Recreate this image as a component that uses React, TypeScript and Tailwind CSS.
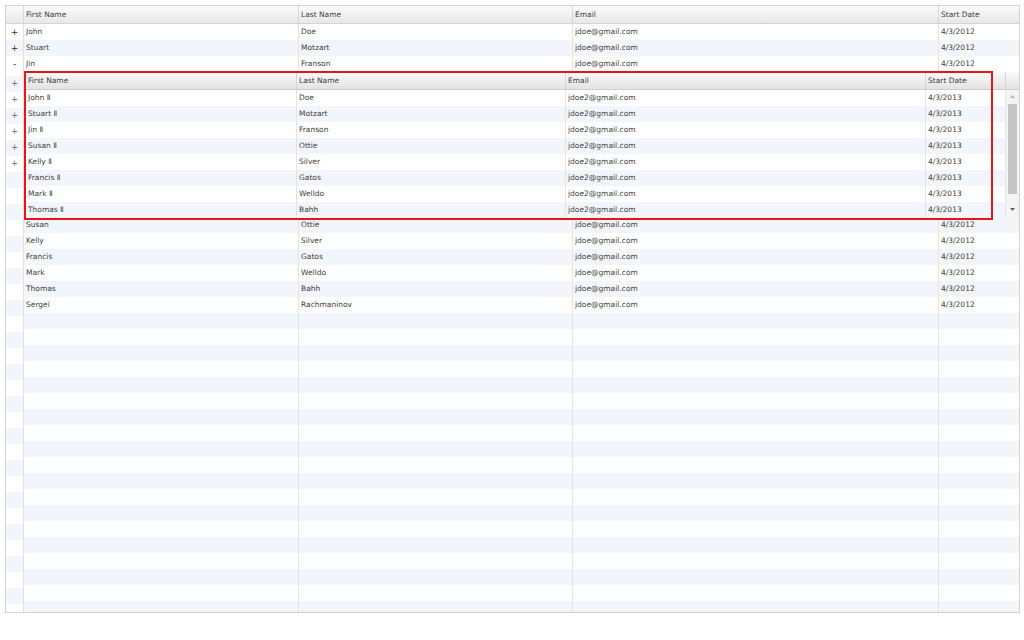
const outerRows = [
  { first: "John", last: "Doe", email: "jdoe@gmail.com", date: "4/3/2012" },
  { first: "Stuart", last: "Motzart", email: "jdoe@gmail.com", date: "4/3/2012" },
  { first: "Jin", last: "Franson", email: "jdoe@gmail.com", date: "4/3/2012" },
  { first: "Susan", last: "Ottie", email: "jdoe@gmail.com", date: "4/3/2012" },
  { first: "Kelly", last: "Silver", email: "jdoe@gmail.com", date: "4/3/2012" },
  { first: "Francis", last: "Gatos", email: "jdoe@gmail.com", date: "4/3/2012" },
  { first: "Mark", last: "Welldo", email: "jdoe@gmail.com", date: "4/3/2012" },
  { first: "Thomas", last: "Bahh", email: "jdoe@gmail.com", date: "4/3/2012" },
  { first: "Sergei", last: "Rachmaninov", email: "jdoe@gmail.com", date: "4/3/2012" },
];

const innerRows = [
  { first: "John Ⅱ", last: "Doe" },
  { first: "Stuart Ⅱ", last: "Motzart" },
  { first: "Jin Ⅱ", last: "Franson" },
  { first: "Susan Ⅱ", last: "Ottie" },
  { first: "Kelly Ⅱ", last: "Silver" },
  { first: "Francis Ⅱ", last: "Gatos" },
  { first: "Mark Ⅱ", last: "Welldo" },
  { first: "Thomas Ⅱ", last: "Bahh" },
];

const stripe = (i: number) => (i % 2 === 1 ? "bg-[#f2f5fa]" : "bg-white");

type Row = { first: string; last: string; email: string; date: string };

function OuterRow({ row, index }: { row?: Row; index: number }) {
  return (
    <div className={`relative flex h-[16px] shrink-0 items-center ${stripe(index)}`}>
      <div className="flex h-full w-[275px] items-center border-r border-[#e4e4e4] pl-[2px]">
        {row?.first}
      </div>
      <div className="flex h-full w-[274px] items-center border-r border-[#e4e4e4] pl-[2px]">
        {row?.last}
      </div>
      <div className="flex h-full w-[366px] items-center border-r border-[#e4e4e4] pl-[2px]">
        {row?.email}
      </div>
      <div className="flex h-full flex-1 items-center pl-[2px]">{row?.date}</div>
    </div>
  );
}

function NestedGrid() {
  return (
    <div className="relative z-10 mb-[-1px] h-[146px] shrink-0">
      <div className="flex h-[18px] bg-gradient-to-b from-[#fafafa] to-[#e3e3e3] border-b border-[#cdcdcd]">
        <div className="flex w-[273px] items-center border-r border-[#d6d6d6] pl-[4px]">First Name</div>
        <div className="flex w-[269px] items-center border-r border-[#d6d6d6] pl-[2px]">Last Name</div>
        <div className="flex w-[360px] items-center border-r border-[#d6d6d6] pl-[2px]">Email</div>
        <div className="flex w-[80px] items-center border-r border-[#d6d6d6] pl-[2px]">Start Date</div>
        <div className="flex-1" />
      </div>
      <div className="flex">
        <div className="flex-1">
          {innerRows.map((r, i) => (
            <div key={r.first} className={`flex h-[16px] items-center ${stripe(i)}`}>
              <div className="flex h-full w-[273px] items-center border-r border-[#e4e4e4] pl-[4px]">{r.first}</div>
              <div className="flex h-full w-[269px] items-center border-r border-[#e4e4e4] pl-[2px]">{r.last}</div>
              <div className="flex h-full w-[360px] items-center border-r border-[#e4e4e4] pl-[2px]">jdoe2@gmail.com</div>
              <div className="flex h-full w-[80px] items-center border-r border-[#e4e4e4] pl-[2px]">4/3/2013</div>
            </div>
          ))}
        </div>
        {/* scrollbar */}
        <div className="flex h-[128px] w-[13px] flex-col items-center bg-[#f4f4f4] py-[2px]">
          <svg width="7" height="5" viewBox="0 0 7 5" className="mt-[2px]">
            <path d="M1 4 L3.5 1 L6 4 Z" fill="#b8b8b8" />
          </svg>
          <div className="mt-[5px] h-[90px] w-[9px] bg-[#c6c6c6]" />
          <div className="flex-1" />
          <svg width="7" height="5" viewBox="0 0 7 5" className="mb-[4px]">
            <path d="M1 1 L3.5 4 L6 1 Z" fill="#606060" />
          </svg>
        </div>
      </div>
      <div className="pointer-events-none absolute left-0 top-[-1px] h-[149px] w-[969px] border-2 border-[#e8141c]" />
    </div>
  );
}

export default function App() {
  const indicators = Array.from({ length: 34 }, (_, k) => k + 3);
  const tail = Array.from({ length: 26 }, (_, k) => k + 3);

  return (
    <div className="h-[640px] w-[1024px] bg-white pl-[5px] pt-[5px] font-['DejaVu_Sans',sans-serif] text-[7.5px] leading-none text-[#404040]">
      <div className="flex h-[608px] w-[1015px] flex-col overflow-hidden border border-[#d3d3d3]">
        {/* header */}
        <div className="flex h-[18px] shrink-0 bg-gradient-to-b from-[#fbfbfb] to-[#e8e8e8] border-b border-[#d4d4d4]">
          <div className="w-[18px] border-r border-[#d6d6d6]" />
          <div className="flex w-[275px] items-center border-r border-[#d6d6d6] pl-[2px]">First Name</div>
          <div className="flex w-[274px] items-center border-r border-[#d6d6d6] pl-[2px]">Last Name</div>
          <div className="flex w-[366px] items-center border-r border-[#d6d6d6] pl-[2px]">Email</div>
          <div className="flex flex-1 items-center pl-[2px]">Start Date</div>
        </div>

        <div className="flex min-h-0 flex-1">
          {/* row indicators */}
          <div className="flex w-[18px] shrink-0 flex-col border-r border-[#e0e0e0]">
            {["+", "+", "-"].map((s, i) => (
              <div key={i} className={`flex h-[16px] shrink-0 items-center justify-center text-[9px] text-[#333] ${stripe(i)}`}>
                {s}
              </div>
            ))}
            <div className="h-[4px] shrink-0 bg-white" />
            {indicators.map((i) => (
              <div key={i} className={`flex h-[16px] shrink-0 items-center justify-center text-[8px] text-[#6a6a6a] ${stripe(i)}`}>
                {i < 9 ? "+" : ""}
              </div>
            ))}
          </div>

          {/* rows */}
          <div className="flex min-w-0 flex-1 flex-col">
            {outerRows.slice(0, 3).map((r, i) => (
              <OuterRow key={r.first} row={r} index={i} />
            ))}
            <NestedGrid />
            {tail.map((i) => (
              <OuterRow key={i} row={outerRows[i]} index={i} />
            ))}
          </div>
        </div>
      </div>
    </div>
  );
}
